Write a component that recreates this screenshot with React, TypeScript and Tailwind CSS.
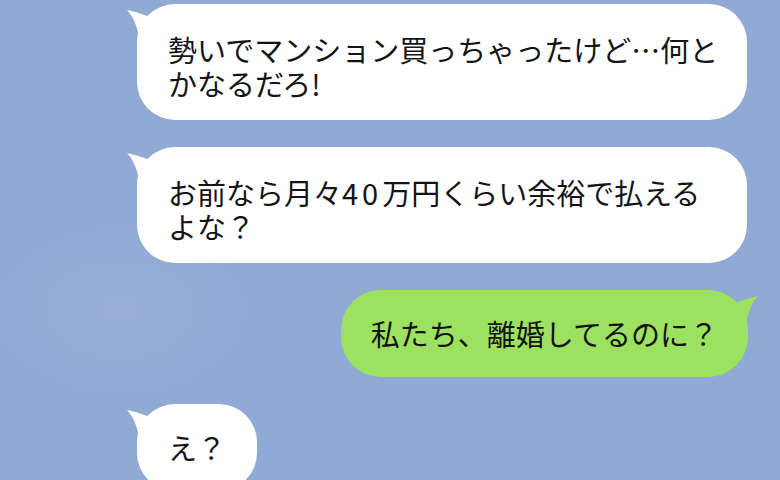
import type { ReactNode } from 'react';

const font = { fontFamily: '"Noto Sans CJK JP", "Noto Sans", sans-serif' };

function Tail({ color, flip }: { color: string; flip?: boolean }) {
  return (
    <svg
      width="28"
      height="36"
      viewBox="0 0 28 36"
      className={flip ? 'absolute -right-[12px] top-0 -scale-x-100' : 'absolute -left-[12px] top-0'}
    >
      <path d="M2 6 Q12 8 25 13 L25 32 L14 32 Q10 14 2 6 Z" fill={color} />
    </svg>
  );
}

function Incoming({ children, wide, multi }: { children: ReactNode; wide?: boolean; multi?: boolean }) {
  return (
    <div className="flex pl-[137px]">
      <div
        className={`relative rounded-[38px] bg-white px-[31px] text-[29px] text-[#141414] ${
          wide ? 'w-[610px]' : ''
        } ${multi ? 'pb-[20px] pt-[28px] leading-[34px]' : 'py-[27px] leading-[33px]'}`}
      >
        <Tail color="#ffffff" />
        <div className="relative whitespace-nowrap">{children}</div>
      </div>
    </div>
  );
}

function Outgoing({ children }: { children: ReactNode }) {
  return (
    <div className="flex justify-end pr-[32px]">
      <div className="relative rounded-[40px] bg-[#9ce260] px-[30px] py-[27px] text-[29px] leading-[33px] text-[#141414]">
        <Tail color="#9ce260" flip />
        <div className="relative whitespace-nowrap">{children}</div>
      </div>
    </div>
  );
}

export default function App() {
  return (
    <div className="relative h-[480px] w-[780px] overflow-hidden bg-[#91a9d5]" style={font}>
      {/* faint cloud in the wallpaper */}
      <div className="absolute left-[-30px] top-[210px] h-[200px] w-[300px] rounded-full bg-[radial-gradient(ellipse_at_center,rgba(255,255,255,0.06),rgba(255,255,255,0)_70%)]" />
      <div className="relative flex flex-col gap-[27px] pt-[4px]">
        <Incoming wide multi>
          <span className="block">勢いでマンション買っちゃったけど…何と</span>
          <span className="block">かなるだろ!</span>
        </Incoming>
        <Incoming wide multi>
          <span className="block">
            お前なら月々<span className="tracking-[4px]">40</span>万円くらい余裕で払える
          </span>
          <span className="block">よな？</span>
        </Incoming>
        <Outgoing>私たち、離婚してるのに？</Outgoing>
        <Incoming>え？</Incoming>
      </div>
    </div>
  );
}
